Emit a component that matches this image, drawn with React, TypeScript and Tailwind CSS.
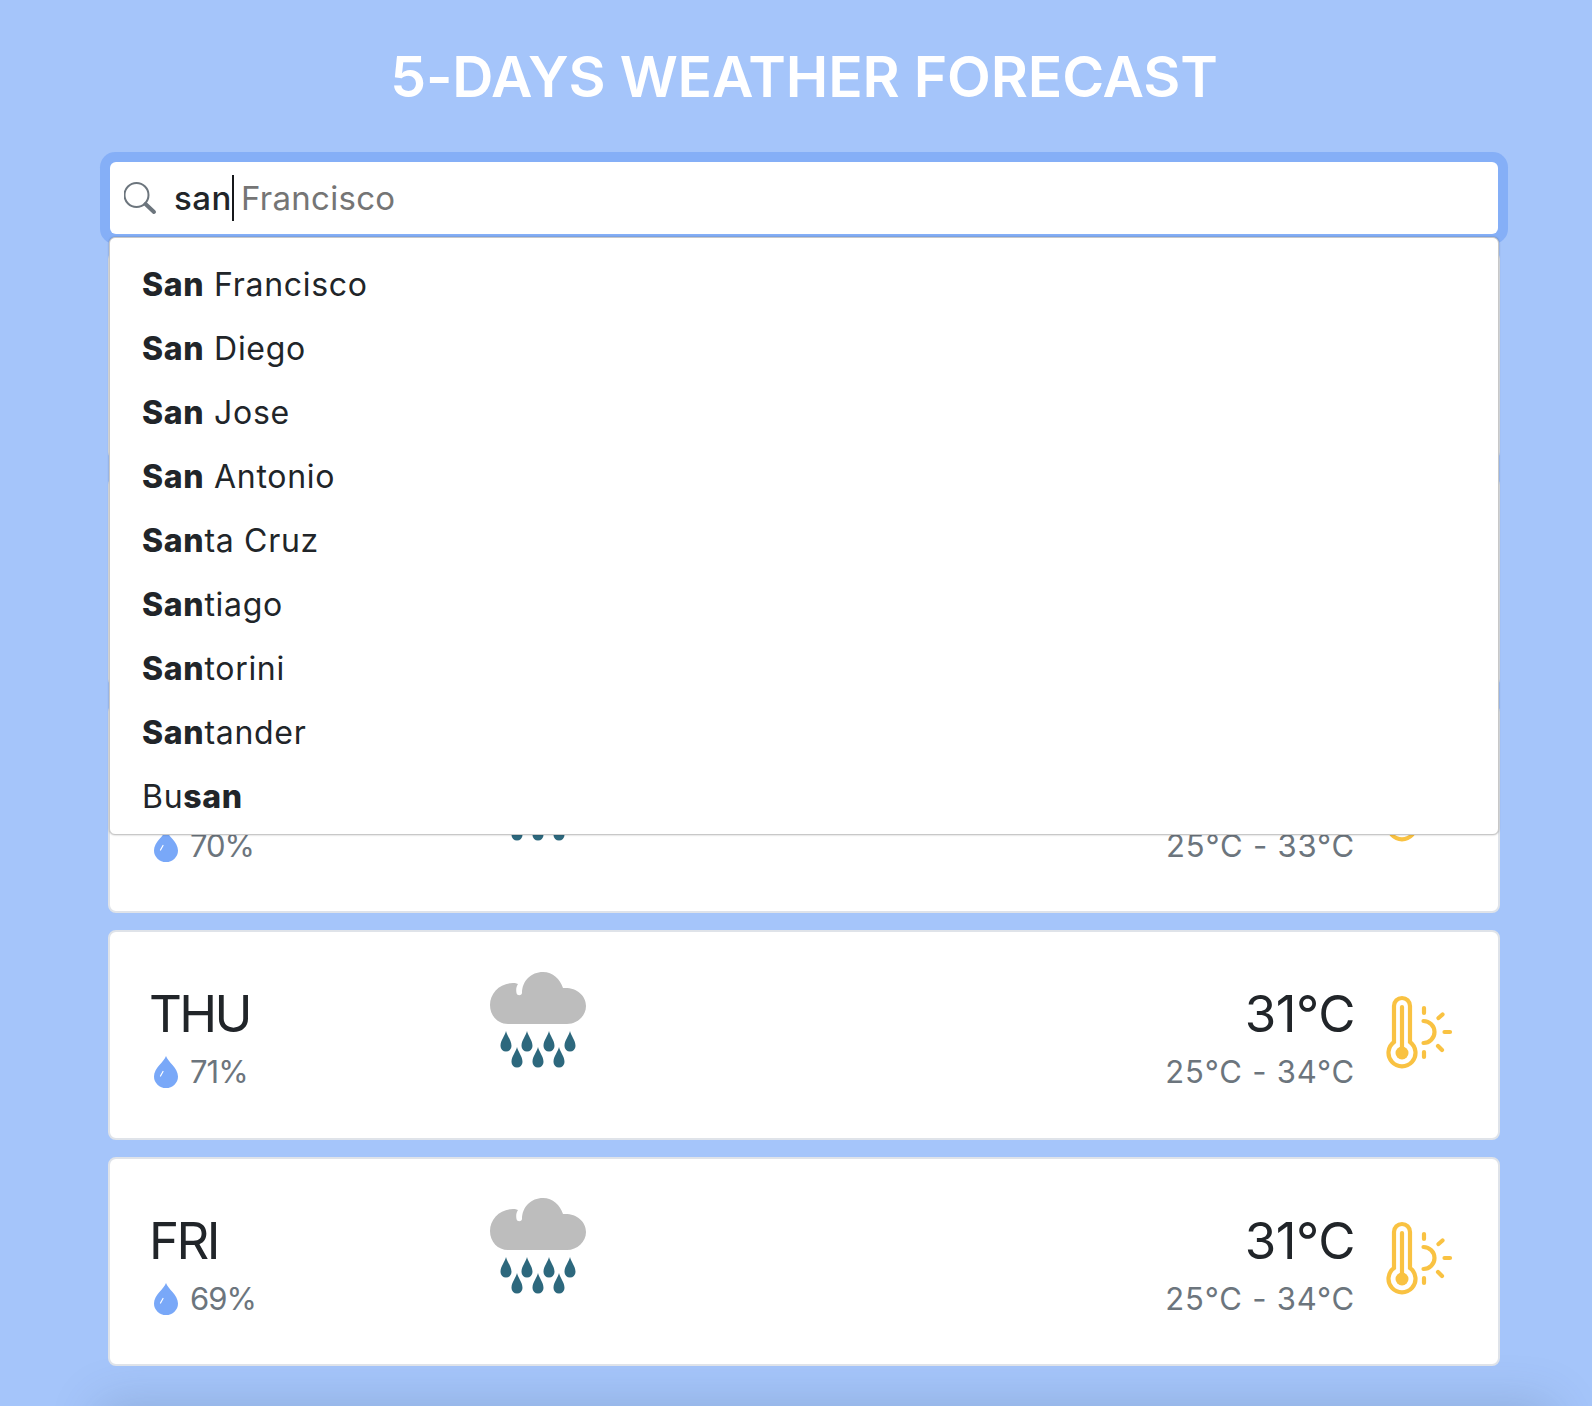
const DAYS = [
  { day: 'MON', rain: '68%', temp: '31°C', range: '25°C - 33°C' },
  { day: 'TUE', rain: '72%', temp: '30°C', range: '25°C - 33°C' },
  { day: 'WED', rain: '70%', temp: '30°C', range: '25°C - 33°C' },
  { day: 'THU', rain: '71%', temp: '31°C', range: '25°C - 34°C' },
  { day: 'FRI', rain: '69%', temp: '31°C', range: '25°C - 34°C' },
]

const CITIES = [
  { before: '', match: 'San', after: ' Francisco' },
  { before: '', match: 'San', after: ' Diego' },
  { before: '', match: 'San', after: ' Jose' },
  { before: '', match: 'San', after: ' Antonio' },
  { before: '', match: 'San', after: 'ta Cruz' },
  { before: '', match: 'San', after: 'tiago' },
  { before: '', match: 'San', after: 'torini' },
  { before: '', match: 'San', after: 'tander' },
  { before: 'Bu', match: 'san', after: '' },
]

const raindrop = (cx: number, y: number) =>
  `M${cx} ${y}C${cx + 1} ${y + 5} ${cx + 5.5} ${y + 9} ${cx + 5.5} ${y + 15}A5.5 5.5 0 0 1 ${cx - 5.5} ${y + 15}C${cx - 5.5} ${y + 9} ${cx - 1} ${y + 5} ${cx} ${y}Z`

function RainCloud() {
  return (
    <svg width="130" height="120" viewBox="0 0 130 120" className="-mt-[30px] shrink-0">
      <path
        fill="#bdbdbd"
        transform="translate(-3 0)"
        d="M38 64C28 64 20 56 20 45C20 33 30 23 43 23C45 23 47 23.5 48 24C46 27 46 30 46.5 33C47 36 51.5 36 52 33C52 21 61 12 73 12C83 12 90 19 93 28C106 27 116 35 116 46C116 56 107 64 97 64Z"
      />
      {[33, 54, 76, 97].map((x) => (
        <path key={x} fill="#2d687d" d={raindrop(x, 71)} />
      ))}
      {[44, 65, 86].map((x) => (
        <path key={x} fill="#2d687d" d={raindrop(x, 87)} />
      ))}
    </svg>
  )
}

function Thermometer() {
  return (
    <svg width="90" height="90" viewBox="0 0 90 90" fill="none" stroke="#f9c242" strokeWidth="4.2" strokeLinecap="round" className="-mt-[10px] shrink-0">
      <path d="M24 57V21a8 8 0 0 1 16 0V57a13.5 13.5 0 1 1-16 0Z" />
      <path d="M32 22V66" />
      <circle cx="32" cy="68" r="6.5" fill="#f9c242" stroke="none" />
      <path d="M53.500 36a11 11 0 0 1 0 22" />
      <path d="M54 23V28M68.500 33L72.500 29.500M74.500 47H80M68 61L72 65M54 67V72" />
    </svg>
  )
}

function Droplet() {
  return (
    <svg width="24" height="32" viewBox="0 0 24 32" className="shrink-0">
      <path fill="#79a8f8" d="M12 0C14 6 24 12 24 20.500A12 11.500 0 0 1 0 20.500C0 12 10 6 12 0Z" />
      <path stroke="#ffffff" strokeWidth="1.200" strokeLinecap="round" d="M6.500 20L9 15.500" />
    </svg>
  )
}

function SearchIcon() {
  return (
    <svg width="34" height="34" viewBox="0 0 34 34" fill="none" stroke="#6c757d" className="shrink-0">
      <circle cx="12.500" cy="14" r="12" strokeWidth="2" />
      <path d="M21.500 23L30 31" strokeWidth="4" strokeLinecap="round" />
    </svg>
  )
}

function DayCard({ day, rain, temp, range }: (typeof DAYS)[number]) {
  return (
    <div className="flex h-[209.500px] items-center rounded-lg border-2 border-[#dfe3e9] bg-white pr-[40px] pl-[41px]">
      <div className="w-[322px] shrink-0 pt-[9px]">
        <div className="-mt-[4px] mb-[7.500px] -ml-[2px] text-[51px] leading-[60px] tracking-[-2.600px] text-[#212529]">{day}</div>
        <div className="mt-[10px] flex items-center gap-[12px] pl-[3px] text-[31px] leading-[36px] tracking-[-1px] text-[#6c757d]">
          <Droplet />
          {rain}
        </div>
      </div>
      <RainCloud />
      <div className="ml-auto pt-[9px] text-right">
        <div className="-mt-[4px] mb-[7.500px] text-[51px] leading-[60px] tracking-[-0.500px] text-[#212529]">{temp}</div>
        <div className="mt-[10px] text-[31px] leading-[36px] tracking-[0.800px] text-[#6c757d]">{range}</div>
      </div>
      <div className="ml-[15px] -mr-[2px]">
        <Thermometer />
      </div>
    </div>
  )
}

export default function App() {
  return (
    <div className="relative h-[1406px] overflow-hidden bg-[#a5c5fa] font-['Inter','Liberation_Sans',sans-serif]">
      <div className="absolute top-[1425px] right-[60px] left-[120px] h-[40px] shadow-[0_0_50px_20px_rgba(60,80,110,0.22)]"></div>

      <div className="relative pr-[92px] pl-[108px]">
        <h1 className="flex h-[154px] items-center justify-center text-[57px] font-semibold tracking-[-0.150px] text-white">
          5-DAYS WEATHER FORECAST
        </h1>

        <div className="relative z-10 mx-[2px] mt-[8px] flex h-[72px] items-center rounded-md bg-white pl-[14px] shadow-[0_0_0_10px_#85aff7]">
          <SearchIcon />
          <span className="mt-[2px] ml-[16px] text-[33px] font-medium tracking-[0.500px] text-[#212529]">san</span>
          <span className="mr-[2px] h-[46px] w-[2px] bg-[#16181b]"></span>
          <span className="mt-[2px] ml-[5px] text-[33px] tracking-[0.300px] text-[#757575]">Francisco</span>

          <div className="absolute top-[75px] -right-[1px] -left-[1px] rounded-md border border-[#c8c8c8] bg-white pt-[15px] pb-[5px] pl-[32px] shadow-[0_0_2px_rgba(0,0,0,0.3)]">
            {CITIES.map((city) => (
              <div key={city.before + city.match + city.after} className="flex h-[64px] items-center whitespace-pre text-[32px] tracking-[0.700px] text-[#212529]">
                {city.before}
                <span className="font-extrabold">{city.match}</span>
                {city.after}
              </div>
            ))}
          </div>
        </div>

        <div className="mt-[16.500px] flex flex-col gap-[17px]">
          {DAYS.map((d) => (
            <DayCard key={d.day} {...d} />
          ))}
        </div>
      </div>
    </div>
  )
}
